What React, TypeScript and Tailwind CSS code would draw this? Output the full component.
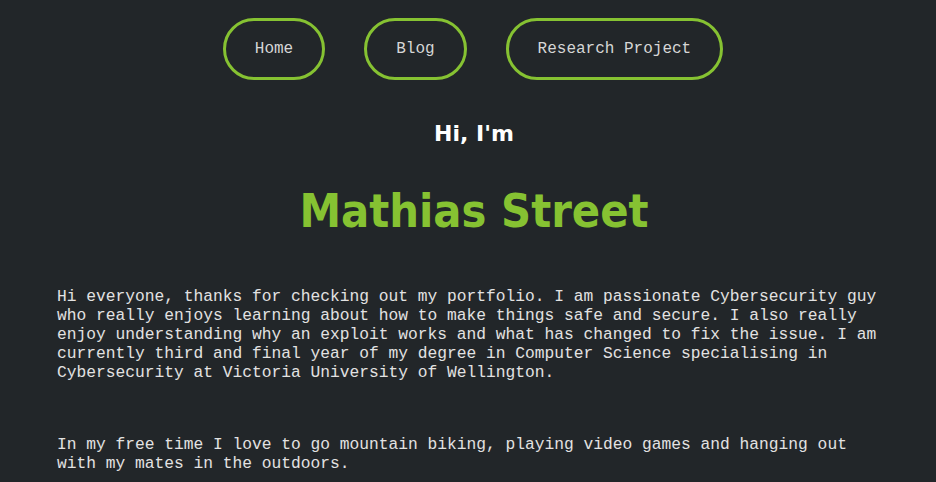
import React from "react";

const navItems = ["Home", "Blog", "Research Project"];

const NavButton = ({ label }: { label: string }) => (
    <a
        href="#"
        className="block rounded-[31px] border-[3px] border-[#86c232] px-[29px] py-[19px] text-[16px] leading-[18px] text-[#d6d6d6]"
    >
        {label}
    </a>
);

export default function App() {
    return (
        <div
            className="min-h-[482px] w-full bg-[#222629] text-[#e2e2e2]"
            style={{ fontFamily: '"Liberation Mono", "Courier New", monospace' }}
        >
            <nav className="flex justify-center gap-[39px] pl-[10px] pt-[18px]">
                {navItems.map((item) => (
                    <NavButton key={item} label={item} />
                ))}
            </nav>

            <div
                className="flex flex-col items-center pl-[12px]"
                style={{ fontFamily: '"DejaVu Sans", Verdana, sans-serif' }}
            >
                <h2 className="mt-[39px] text-[22px] font-bold leading-[30px] text-white">Hi, I'm</h2>
                <h1
                    className="mt-[32px] text-[46.5px] font-bold leading-[60px] text-[#86c232]"
                    style={{ fontFamily: '"DejaVu Sans Condensed", "DejaVu Sans", sans-serif', fontStretch: "condensed" }}
                >
                    Mathias Street
                </h1>
            </div>

            <div className="mx-auto mt-[46px] w-[822px] text-[16.25px] leading-[19px]">
                <p>
                    Hi everyone, thanks for checking out my portfolio. I am passionate Cybersecurity guy
                    who really enjoys learning about how to make things safe and secure. I also really
                    enjoy understanding why an exploit works and what has changed to fix the issue. I am
                    currently third and final year of my degree in Computer Science specialising in
                    Cybersecurity at Victoria University of Wellington.
                </p>
                <p className="mt-[53px]">
                    In my free time I love to go mountain biking, playing video games and hanging out
                    with my mates in the outdoors.
                </p>
            </div>
        </div>
    );
}
